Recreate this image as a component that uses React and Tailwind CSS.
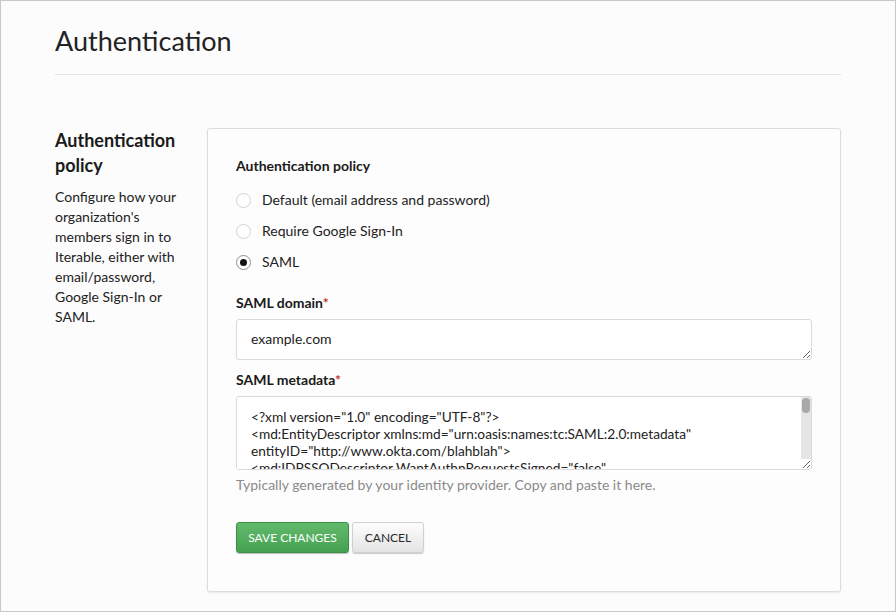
import React from 'react';

const metadata = `<?xml version="1.0" encoding="UTF-8"?>
<md:EntityDescriptor xmlns:md="urn:oasis:names:tc:SAML:2.0:metadata" entityID="http://www.okta.com/blahblah">
<md:IDPSSODescriptor WantAuthnRequestsSigned="false" protocolSupportEnumeration="urn:oasis:names:tc:SAML:2.0:protocol">
<md:KeyDescriptor use="signing">
<ds:KeyInfo xmlns:ds="http://www.w3.org/2000/09/xmldsig#">
<ds:X509Data>
<ds:X509Certificate>MIIDpDCCAoygAwIBAgIGAVq1aW8wMA0GCSqGSIb3DQEBCwUAMIGSMQswCQYDVQQGEwJVUzETMBEG</ds:X509Certificate>
</ds:X509Data>
</ds:KeyInfo>
</md:KeyDescriptor>
<md:SingleSignOnService Binding="urn:oasis:names:tc:SAML:2.0:bindings:HTTP-POST" Location="https://example.okta.com/app/sso/saml"/>
</md:IDPSSODescriptor>
</md:EntityDescriptor>`;

const font = { fontFamily: 'Lato, "Open Sans", sans-serif' };

export default function App() {
  return (
    <div style={font} className="w-[896px] h-[612px] border border-[#c9c9c9] bg-[#fcfcfc] px-[54px] text-[#222] overflow-hidden">
      <h1 className="pt-[23px] pb-[16px] text-[27px] leading-[34px] font-normal text-[#222] border-b border-[#e3e3e3]">Authentication</h1>

      <div className="flex mt-[53px]">
        <div className="w-[152px] shrink-0 pr-[20px]">
          <h2 className="text-[18px] leading-[25px] font-bold text-[#1a1a1a]">Authentication policy</h2>
          <p className="mt-[9px] text-[14px] leading-[20px] text-[#222]">
            Configure how your organization's members sign in to Iterable, either with email/password, Google Sign-In or SAML.
          </p>
        </div>

        <div className="w-[634px] h-[464px] bg-[#fdfdfd] border border-[#dcdcdc] rounded-[3px] shadow-[0_1px_2px_rgba(0,0,0,0.08)] px-[28px] pt-[27px]">
          <div className="text-[14px] leading-[20px] font-bold text-[#1a1a1a]">Authentication policy</div>

          <div className="mt-[14px] flex flex-col gap-[11px]">
            <Radio label="Default (email address and password)" />
            <Radio label="Require Google Sign-In" />
            <Radio label="SAML" checked />
          </div>

          <Label className="mt-[21px]">SAML domain</Label>
          <textarea
            rows={1}
            defaultValue="example.com"
            className="mt-[6px] block w-full h-[41px] resize-y overflow-hidden bg-white border border-[#dadada] rounded-[3px] px-[14px] py-[9px] text-[14px] leading-[20px] text-[#222] outline-none"
          />

          <Label className="mt-[10px]">SAML metadata</Label>
          <div className="relative mt-[6px]">
            <textarea
              defaultValue={metadata}
              className="block w-full h-[74px] resize-y overflow-y-scroll bg-white border border-[#dadada] rounded-[3px] pl-[14px] pr-[8px] pt-[11px] text-[13.7px] leading-[17px] text-[#222] outline-none"
            />
            <div className="absolute right-[1px] top-[1px] h-[62px] w-[10px] bg-[#e5e5e5] pointer-events-none">
              <div className="mx-auto mt-[1px] w-[8px] h-[15px] rounded-full bg-[#a8a8a8]" />
            </div>
          </div>
          <p className="mt-[5px] text-[14px] leading-[20px] text-[#8a8a8a]">Typically generated by your identity provider. Copy and paste it here.</p>

          <div className="mt-[27px] flex gap-[3px]">
            <button className="h-[31px] w-[113px] rounded-[3px] border border-[#3b8f46] bg-gradient-to-b from-[#62ba6c] to-[#45a251] shadow-[0_1px_1px_rgba(0,0,0,0.25)] text-white text-[12px]">
              SAVE CHANGES
            </button>
            <button className="h-[31px] w-[72px] rounded-[3px] border border-[#cfcfcf] bg-gradient-to-b from-[#fdfdfd] to-[#e4e4e4] shadow-[0_1px_1px_rgba(0,0,0,0.2)] text-[#2a2a2a] text-[12px]">
              CANCEL
            </button>
          </div>
        </div>
      </div>
    </div>
  );
}

function Label({ children, className }) {
  return (
    <div className={`text-[14px] leading-[20px] font-bold text-[#1a1a1a] ${className}`}>
      {children}<span className="text-[#c0392b]">*</span>
    </div>
  );
}

function Radio({ label, checked }) {
  return (
    <label className="flex items-center h-[20px] text-[14px] leading-[20px] text-[#222]">
      <span className={`w-[15px] h-[15px] rounded-full bg-white border flex items-center justify-center ${checked ? 'border-[#8f8f8f]' : 'border-[#d2d2d2]'}`}>
        {checked && <span className="w-[7px] h-[7px] rounded-full bg-[#111]" />}
      </span>
      <span className="ml-[11px]">{label}</span>
    </label>
  );
}
